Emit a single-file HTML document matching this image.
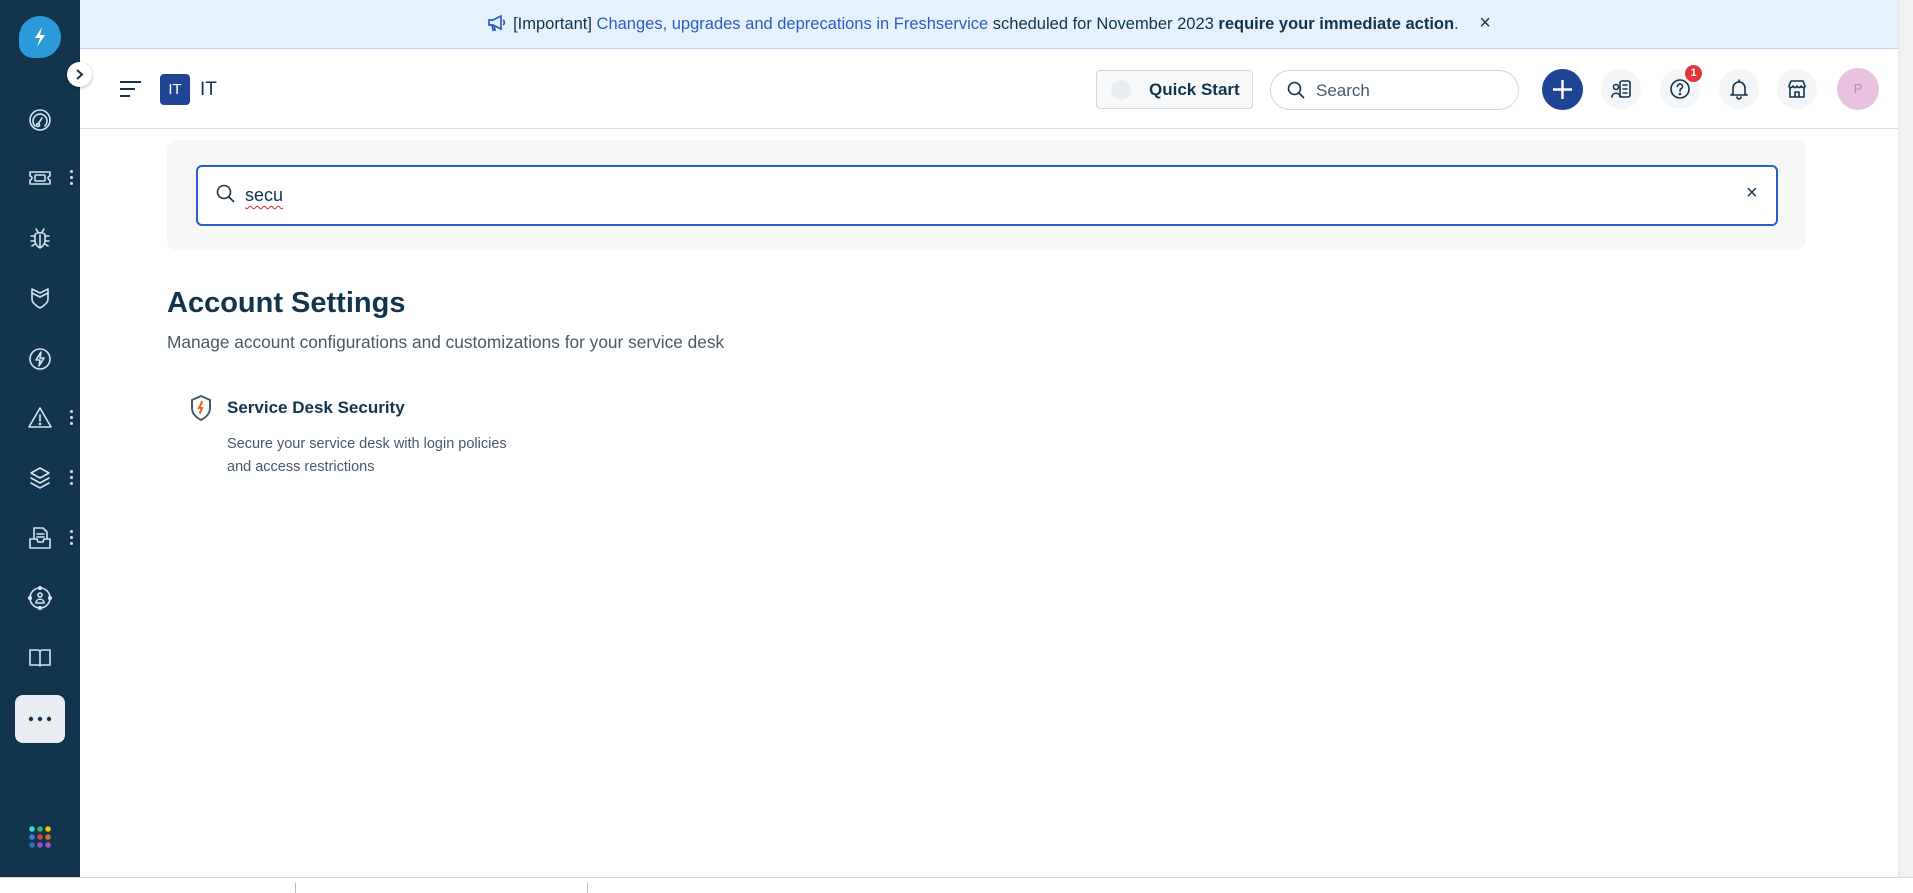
<!DOCTYPE html>
<html><head><meta charset="utf-8"><style>
*{box-sizing:border-box;margin:0;padding:0}
body{width:1913px;height:893px;overflow:hidden;background:#fff;font-family:"Liberation Sans",sans-serif;position:relative;color:#12344d}
.abs{position:absolute}
#side{left:0;top:0;width:80px;height:877px;background:#12344d}
.ic{position:absolute;left:27px;width:26px;height:26px}
.ic svg{width:26px;height:26px;fill:none;stroke:#d5e3f1;stroke-width:1.6;stroke-linecap:round;stroke-linejoin:round}
.dots{position:absolute;left:70px;width:4px}
.dots i{display:block;width:3px;height:3px;border-radius:50%;background:#d5e3f1;margin-bottom:3px}
#banner{left:80px;top:0;width:1818px;height:49px;background:#e5f2fc;border-bottom:1px solid #bcd7ef;font-size:16.5px;line-height:47px;text-align:center;color:#12344d}
#banner a{color:#2c5cc5;text-decoration:none}
#header{left:80px;top:49px;width:1818px;height:80px;border-bottom:1px solid #dadfe3;background:#fff}
.circ{position:absolute;width:40px;height:40px;border-radius:50%;background:#f3f5f7;top:20px}
.circ svg{position:absolute;left:9px;top:9px;width:22px;height:22px;fill:none;stroke:#12344d;stroke-width:1.6;stroke-linecap:round;stroke-linejoin:round}
</style></head><body>

<div id="side" class="abs">
  <div class="abs" style="left:19px;top:16px;width:42px;height:42px;border-radius:50%;background:#2c9ad9;border-bottom-left-radius:14px"></div>
  <svg class="abs" style="left:28px;top:24px" width="24" height="26" viewBox="0 0 24 26"><path d="M14 3 L7 14 H12 L9 23 L17 11 H12 Z" fill="#fff"/></svg>
  <div class="ic" style="top:107px"><svg viewBox="0 0 26 26"><circle cx="13" cy="13" r="10"/><path d="M8 19a7 7 0 1 1 10 0"/><path d="M11 17l4-6"/><circle cx="11" cy="18" r="1.5"/></svg></div>
  <div class="ic" style="top:165px"><svg viewBox="0 0 26 26"><path d="M3 7h20v4a2 2 0 0 0 0 4v4H3v-4a2 2 0 0 0 0-4z"/><rect x="8" y="10" width="10" height="6" rx="1"/></svg></div>
  <div class="dots" style="top:170px"><i></i><i></i><i></i></div>
  <div class="ic" style="top:225px"><svg viewBox="0 0 26 26"><path d="M9 4l2 3M17 4l-2 3"/><path d="M8 10c0-3 10-3 10 0v6c0 4-5 7-5 7s-5-3-5-7z"/><path d="M4 11h4M18 11h4M4 16h4M18 16h4M5 21l3-2M21 21l-3-2M13 10v12"/></svg></div>
  <div class="ic" style="top:285px"><svg viewBox="0 0 26 26"><path d="M5 4l8 4 8-4v10c0 5-8 9-8 9s-8-4-8-9z"/><path d="M5 8l8 4 8-4"/></svg></div>
  <div class="ic" style="top:346px"><svg viewBox="0 0 26 26"><circle cx="13" cy="13" r="10"/><path d="M14 6l-5 8h4l-1 6 5-8h-4z"/></svg></div>
  <div class="ic" style="top:405px"><svg viewBox="0 0 26 26"><path d="M13 3L2 22h22z"/><path d="M13 10v6"/><circle cx="13" cy="19" r=".6"/></svg></div>
  <div class="dots" style="top:410px"><i></i><i></i><i></i></div>
  <div class="ic" style="top:465px"><svg viewBox="0 0 26 26"><path d="M13 3l9 5-9 5-9-5z"/><path d="M4 13l9 5 9-5M4 18l9 5 9-5"/></svg></div>
  <div class="dots" style="top:470px"><i></i><i></i><i></i></div>
  <div class="ic" style="top:525px"><svg viewBox="0 0 26 26"><path d="M7 13V3h9l4 4v6"/><path d="M10 9h7M10 12h7"/><path d="M3 14h7l1 3h5l1-3h6v9H3z"/></svg></div>
  <div class="dots" style="top:530px"><i></i><i></i><i></i></div>
  <div class="ic" style="top:585px"><svg viewBox="0 0 26 26"><circle cx="13" cy="13" r="10"/><circle cx="13" cy="10" r="2"/><path d="M9 18c0-5 8-5 8 0z"/><circle cx="13" cy="3" r="1.3"/><circle cx="13" cy="23" r="1.3"/><circle cx="3" cy="13" r="1.3"/><circle cx="23" cy="13" r="1.3"/></svg></div>
  <div class="ic" style="top:645px"><svg viewBox="0 0 26 26"><path d="M3 5h8c1 0 2 1 2 2v14M23 5h-8c-1 0-2 1-2 2M3 5v15h10M23 5v15H13"/></svg></div>
  <div class="abs" style="left:15px;top:695px;width:50px;height:48px;border-radius:8px;background:#e8edf2">
    <svg class="abs" style="left:13px;top:21px" width="24" height="6" viewBox="0 0 24 6" fill="#12344d"><circle cx="3" cy="3" r="2.2"/><circle cx="12" cy="3" r="2.2"/><circle cx="21" cy="3" r="2.2"/></svg>
  </div>
  <svg class="abs" style="left:28px;top:825px" width="24" height="24" viewBox="0 0 24 24">
    <circle cx="4" cy="4" r="2.8" fill="#3dd6d6"/><circle cx="12" cy="4" r="2.8" fill="#2fb36a"/><circle cx="20" cy="4" r="2.8" fill="#f3c300"/>
    <circle cx="4" cy="12" r="2.8" fill="#2c8ad9"/><circle cx="12" cy="12" r="2.8" fill="#d8404a"/><circle cx="20" cy="12" r="2.8" fill="#e56a2a"/>
    <circle cx="4" cy="20" r="2.8" fill="#2f6fb5"/><circle cx="12" cy="20" r="2.8" fill="#8a56c8"/><circle cx="20" cy="20" r="2.8" fill="#a257c8"/>
  </svg>
</div>
<div class="abs" style="left:67px;top:62px;width:25px;height:25px;border-radius:50%;background:#fff;box-shadow:0 1px 3px rgba(0,0,0,.3);z-index:3">
  <svg class="abs" style="left:8px;top:7px" width="9" height="11" viewBox="0 0 9 11" fill="none" stroke="#12344d" stroke-width="2"><path d="M2 1l5 4.5L2 10"/></svg>
</div>

<div id="banner" class="abs">
  <svg style="vertical-align:-3px;margin-right:6px" width="20" height="18" viewBox="0 0 20 18" fill="none" stroke="#2c5cc5" stroke-width="1.7"><path d="M2 6h4l8-4v13l-8-4H2z"/><path d="M5 11l1 5h2l-1-5M16 6a3 3 0 0 1 0 5"/></svg>[Important] <a>Changes, upgrades and deprecations in Freshservice</a> scheduled for November 2023 <b style="font-weight:600">require your immediate action</b>. <span style="margin-left:16px;font-size:20px">×</span>
</div>

<div id="header" class="abs">
  <svg class="abs" style="left:40px;top:32px" width="22" height="16" viewBox="0 0 22 16" stroke="#12344d" stroke-width="2"><path d="M0 1h21M0 8h15M0 15h10"/></svg>
  <div class="abs" style="left:80px;top:25px;width:30px;height:31px;border-radius:4px;background:#1f4493;color:#fff;font-size:15px;text-align:center;line-height:31px">IT</div>
  <div class="abs" style="left:120px;top:30px;font-size:19px">IT</div>
  <div class="abs" style="left:1016px;top:21px;width:157px;height:39px;border:1px solid #d4d9de;border-radius:4px;background:#f7f9fa">
    <div class="abs" style="left:14px;top:9px;width:20px;height:20px;border-radius:50%;background:#ebeef0"></div>
    <div class="abs" style="left:52px;top:9px;font-size:17px;font-weight:600">Quick Start</div>
  </div>
  <div class="abs" style="left:1190px;top:21px;width:249px;height:40px;border:1px solid #cfd7df;border-radius:20px">
    <svg class="abs" style="left:16px;top:10px" width="18" height="18" viewBox="0 0 18 18" fill="none" stroke="#12344d" stroke-width="1.6"><circle cx="7.5" cy="7.5" r="6"/><path d="M12 12l5 5"/></svg>
    <div class="abs" style="left:45px;top:10px;font-size:17px;color:#475867">Search</div>
  </div>
  <div class="abs" style="left:1462px;top:20px;width:41px;height:41px;border-radius:50%;background:#1f4493">
    <svg class="abs" style="left:10px;top:10px" width="21" height="21" viewBox="0 0 21 21" stroke="#fff" stroke-width="2.4"><path d="M10.5 1v19M1 10.5h19"/></svg>
  </div>
  <div class="circ" style="left:1521px"><svg viewBox="0 0 22 22"><rect x="10" y="3" width="10" height="16" rx="2"/><path d="M13 7h4M13 11h4M13 15h4"/><circle cx="6" cy="9" r="2.5"/><path d="M2 19c0-5 8-5 8 0"/></svg></div>
  <div class="circ" style="left:1580px"><svg viewBox="0 0 22 22"><circle cx="11" cy="11" r="9"/><path d="M8.5 8.5a2.5 2.5 0 1 1 3.5 2.3c-1 .4-1 1.2-1 2.2"/><circle cx="11" cy="16" r=".5"/></svg></div>
  <div class="abs" style="left:1605px;top:16px;width:17px;height:17px;border-radius:50%;background:#e43538;color:#fff;font-size:11px;font-weight:bold;text-align:center;line-height:17px">1</div>
  <div class="circ" style="left:1639px"><svg viewBox="0 0 22 22"><path d="M5 16V10a6 6 0 0 1 12 0v6l2 1H3z"/><path d="M9 19a2 2 0 0 0 4 0M11 2v2"/></svg></div>
  <div class="circ" style="left:1697px"><svg viewBox="0 0 22 22"><path d="M3 8l2-5h12l2 5c0 2-3 2-4 0-1 2-3 2-4 0-1 2-3 2-4 0-1 2-4 2-4 0z"/><path d="M4 10v9h14v-9M9 19v-5h4v5"/></svg></div>
  <div class="abs" style="left:1757px;top:19px;width:42px;height:42px;border-radius:50%;background:#e9c2e2;color:#b58ab0;font-size:13px;text-align:center;line-height:42px">P</div>
</div>

<div class="abs" style="left:1898px;top:0;width:15px;height:877px;background:#f1f1f1;border-left:1px solid #e6e6e6"></div>
<div class="abs" style="left:0;top:877px;width:1913px;height:16px;background:#fff;border-top:1px solid #d6d6d6"></div>
<div class="abs" style="left:295px;top:883px;width:1px;height:10px;background:#bbb"></div>
<div class="abs" style="left:587px;top:883px;width:1px;height:10px;background:#bbb"></div>

<div class="abs" style="left:167px;top:140px;width:1639px;height:110px;background:#f5f7f9;border-radius:10px"></div>
<div class="abs" style="left:196px;top:165px;width:1582px;height:61px;border:2px solid #2c5cc5;border-radius:6px;background:#fff">
  <svg class="abs" style="left:18px;top:17px" width="20" height="20" viewBox="0 0 20 20" fill="none" stroke="#12344d" stroke-width="1.6"><circle cx="8" cy="8" r="6.5"/><path d="M13 13l5 5"/></svg>
  <div class="abs" style="left:47px;top:18px;font-size:18px;color:#12344d;text-decoration:underline wavy #e02020;text-underline-offset:4px;text-decoration-thickness:1px">secu</div>
  <div class="abs" style="left:1548px;top:15px;font-size:20px;color:#12344d">×</div>
</div>

<div class="abs" style="left:167px;top:287px;font-size:29px;font-weight:600;color:#12344d">Account Settings</div>
<div class="abs" style="left:167px;top:332px;font-size:17.3px;color:#475867">Manage account configurations and customizations for your service desk</div>

<svg class="abs" style="left:189px;top:394px" width="24" height="28" viewBox="0 0 24 28" fill="none"><path d="M12 2l9 4v8c0 6-5 10-9 12-4-2-9-6-9-12V6z" stroke="#475867" stroke-width="2"/><path d="M13 8l-3 6h3l-2 5" stroke="#e8631c" stroke-width="2" stroke-linecap="round"/></svg>
<div class="abs" style="left:227px;top:398px;font-size:17px;font-weight:600;color:#12344d">Service Desk Security</div>
<div class="abs" style="left:227px;top:433px;font-size:14.5px;color:#475867;line-height:23px">Secure your service desk with login policies<br>and access restrictions</div>
</body></html>
